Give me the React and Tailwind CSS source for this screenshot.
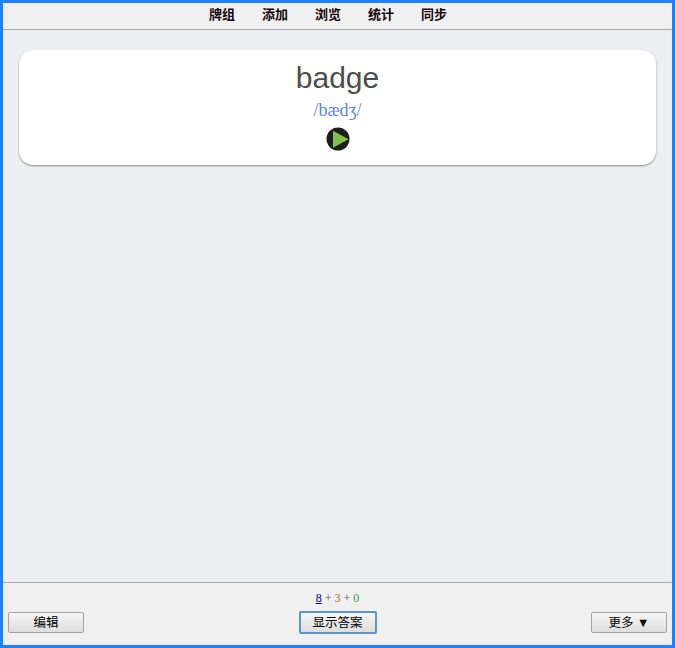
const tabs = ["牌组", "添加", "浏览", "统计", "同步"];

function PlayIcon() {
  return (
    <svg width="24" height="24" viewBox="0 0 24 24">
      <circle cx="12" cy="12" r="11.5" fill="#1d1d1b" />
      <path d="M7 3.8 L22.5 12.2 L7 20.8 Z" fill="#84c050" />
    </svg>
  );
}

function Button({ className, children }) {
  return (
    <button
      type="button"
      className={
        "rounded-[2px] bg-gradient-to-b from-[#f6f6f6] to-[#dedede] pt-px text-[12.5px] leading-none text-black " +
        className
      }
    >
      {children}
    </button>
  );
}

export default function App() {
  return (
    <div className="flex h-[648px] w-[675px] flex-col border-[3px] border-[#1e80ff] bg-[#eeeff3] font-['Liberation_Sans','Noto_Sans_CJK_SC',sans-serif]">
      <div className="flex h-[27px] shrink-0 items-center justify-center gap-[27px] border-b border-[#aaaaaa] bg-[#f0f0f0] pr-[19px] pb-[2px] text-[13px] font-bold text-[#14060c]">
        {tabs.map((tab) => (
          <span key={tab}>{tab}</span>
        ))}
      </div>

      <div className="flex-1 px-4 pt-5">
        <div className="flex h-[115px] flex-col items-center rounded-[14px] bg-white pt-[9px] shadow-[0_1px_2px_#8a8a8a]">
          <div className="text-[30px] leading-[38px] text-[#4d4d4d]">badge</div>
          <div className="mt-[3px] font-['Liberation_Serif',serif] text-[18px] leading-5 text-[#5b87e0]">
            /bædʒ/
          </div>
          <div className="mt-[7px]">
            <PlayIcon />
          </div>
        </div>
      </div>

      <div className="h-[63px] shrink-0 border-t border-[#aaaaaa] bg-[#f0f0f0]">
        <div className="flex h-[28px] items-center justify-center gap-[3px] pt-[2px] font-['Liberation_Serif',serif] text-[12px] text-[#555555]">
          <span className="text-[#000080] underline">8</span>
          <span>+</span>
          <span className="text-[#b5651d]">3</span>
          <span>+</span>
          <span className="text-[#2e9e3f]">0</span>
        </div>
        <div className="flex items-center justify-between px-[5px]">
          <Button className="h-[21px] w-[76px] border border-[#a3a3a3]">编辑</Button>
          <Button className="h-[23px] w-[78px] border-2 border-[#5a96c8]">显示答案</Button>
          <Button className="h-[21px] w-[76px] border border-[#a3a3a3]">更多 ▼</Button>
        </div>
      </div>
    </div>
  );
}
